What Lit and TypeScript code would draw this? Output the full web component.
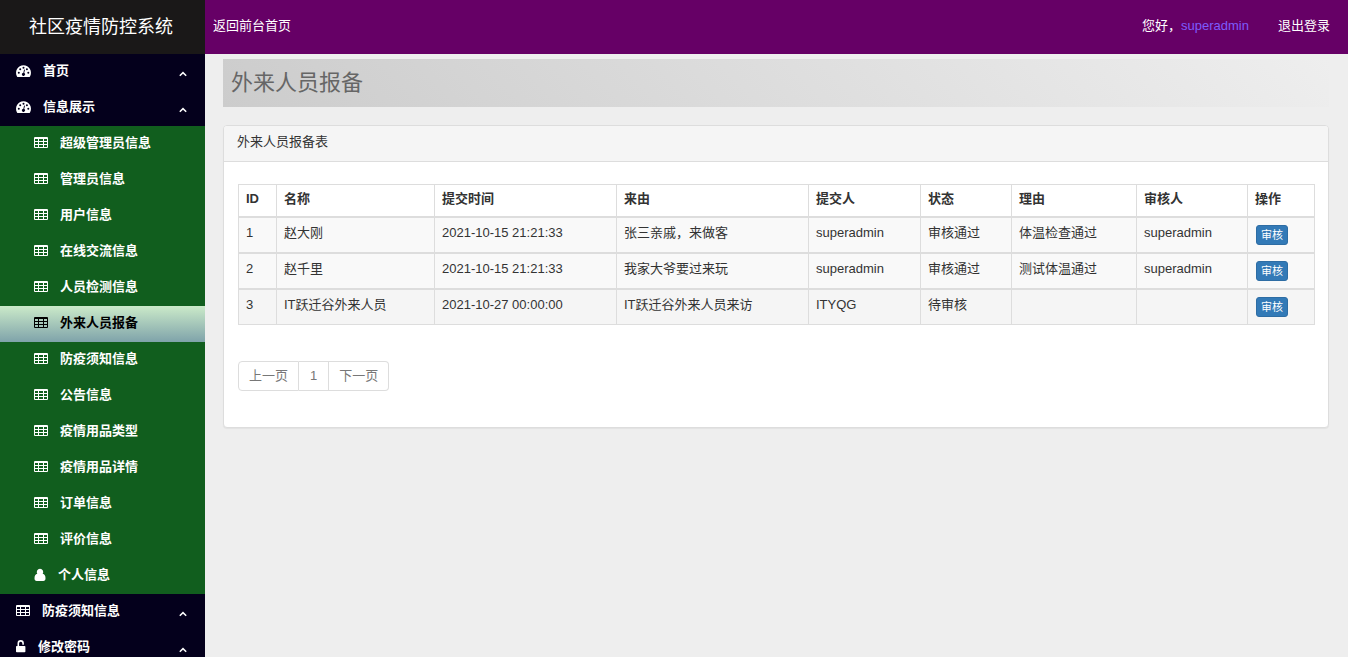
import { LitElement, html, css, svg } from "lit";
import { customElement } from "lit/decorators.js";
import { classMap } from "lit/directives/class-map.js";

type IconName = "dashboard" | "table" | "user" | "unlock";

const icons = {
  dashboard: svg`<path fill-rule="evenodd" d="M7.5 1.300a7.500 7.500 0 0 1 6.500 11.200q-.3.500-.9.500H1.900q-.6 0-.9-.5A7.500 7.500 0 0 1 7.500 1.300zM2.800 7.700a1 1 0 1 0 0 2 1 1 0 0 0 0-2zM4.200 4.300a1 1 0 1 0 0 2 1 1 0 0 0 0-2zM7.500 2.800a1 1 0 1 0 0 2 1 1 0 0 0 0-2zM10.900 4.300a1 1 0 1 0 0 2 1 1 0 0 0 0-2zM12.300 7.700a1 1 0 1 0 0 2 1 1 0 0 0 0-2zM8.100 5.600l-.8 3.300a1.500 1.500 0 1 0 .9.2l.8-3.300z"/>`,
  table: svg`<path fill-rule="evenodd" d="M1 1h12q1 0 1 1v9q0 1-1 1H1q-1 0-1-1V2q0-1 1-1zM1 3v2h3V3zM5 3v2h4V3zM10 3v2h3V3zM1 6v2h3V6zM5 6v2h4V6zM10 6v2h3V6zM1 9v2h3V9zM5 9v2h4V9zM10 9v2h3V9z"/>`,
  user: svg`<path d="M6 .8a3.200 3.200 0 0 1 2.700 5q2.800.7 2.800 4.500 0 2.700-2.200 2.700H2.700Q.5 13 .5 10.300q0-3.800 2.800-4.500A3.200 3.200 0 0 1 6 .8z"/>`,
  unlock: svg`<path d="M1.500 6V3.300a3.200 3.200 0 0 1 6.400 0v.900q0 .5-.5.500h-.6q-.5 0-.5-.5v-.9a1.600 1.600 0 0 0-3.200 0V6h5.500q.8 0 .8.800v4.700q0 .8-.8.800H.8q-.8 0-.8-.8V6.800Q0 6 .8 6z"/>`,
};

const iconWidths: Record<IconName, number> = { dashboard: 15, table: 14, user: 12, unlock: 10 };

const icon = (name: IconName) => html`<svg
  class="icon" width=${iconWidths[name]} height="14"
  viewBox="0 0 ${iconWidths[name]} 14" aria-hidden="true">${icons[name]}</svg>`;

const chevron = html`<svg class="chevron" width="8" height="6" viewBox="0 0 8 6" aria-hidden="true">
  <path d="M.8 4.800 4 1.600l3.200 3.200" fill="none" stroke="currentColor" stroke-width="1.500"/></svg>`;

interface Entry {
  label: string;
  icon: IconName;
  active?: boolean;
}

const displayItems: Entry[] = [
  ...["超级管理员信息", "管理员信息", "用户信息", "在线交流信息", "人员检测信息"].map(
    (label): Entry => ({ label, icon: "table" })),
  { label: "外来人员报备", icon: "table", active: true },
  ...["防疫须知信息", "公告信息", "疫情用品类型", "疫情用品详情", "订单信息", "评价信息"].map(
    (label): Entry => ({ label, icon: "table" })),
  { label: "个人信息", icon: "user" },
];

const groups: (Entry & { children?: Entry[] })[] = [
  { label: "首页", icon: "dashboard" },
  { label: "信息展示", icon: "dashboard", children: displayItems },
  { label: "防疫须知信息", icon: "table" },
  { label: "修改密码", icon: "unlock" },
];

@customElement("side-menu")
export class SideMenu extends LitElement {
  static styles = css`
    :host { display: block; background: #04001c; color: #fff; }
    ul { list-style: none; margin: 0; padding: 0; }
    .link {
      display: flex; align-items: center; gap: 12px; height: 36px; box-sizing: border-box;
      padding: 0 18px 2px 16px; color: inherit; font-weight: 700; text-decoration: none;
    }
    .label { flex: 1; }
    .icon { fill: currentColor; flex: none; }
    .chevron { margin-top: 6px; }
    .sub { background: #115e1e; }
    .sub .link { padding-left: 34px; }
    .sub .active { color: #000; background: linear-gradient(#cbeac9, #7fa3aa); }
  `;

  private link(entry: Entry, top: boolean) {
    return html`<a class=${classMap({ link: true, active: !!entry.active })} href="#">
      ${icon(entry.icon)}<span class="label">${entry.label}</span>${top ? chevron : ""}
    </a>`;
  }

  render() {
    return html`<nav><ul>
      ${groups.map((g) => html`<li>
        ${this.link(g, true)}
        ${g.children
          ? html`<ul class="sub">${g.children.map((c) => html`<li>${this.link(c, false)}</li>`)}</ul>`
          : ""}
      </li>`)}
    </ul></nav>`;
  }
}

const columns: [string, number][] = [
  ["ID", 38], ["名称", 158], ["提交时间", 182], ["来由", 192], ["提交人", 112],
  ["状态", 91], ["理由", 125], ["审核人", 111], ["操作", 67],
];

const rows = [
  ["1", "赵大刚", "2021-10-15 21:21:33", "张三亲戚，来做客", "superadmin", "审核通过", "体温检查通过", "superadmin"],
  ["2", "赵千里", "2021-10-15 21:21:33", "我家大爷要过来玩", "superadmin", "审核通过", "测试体温通过", "superadmin"],
  ["3", "IT跃迁谷外来人员", "2021-10-27 00:00:00", "IT跃迁谷外来人员来访", "ITYQG", "待审核", "", ""],
];

@customElement("report-panel")
export class ReportPanel extends LitElement {
  static styles = css`
    :host {
      display: block; background: #fff; border: 1px solid #ddd; border-radius: 4px;
      box-shadow: 0 1px 1px rgba(0, 0, 0, 0.05);
    }
    .heading {
      margin: 0; padding: 7px 13px 10px; font-size: 13px; line-height: 18px; font-weight: 400;
      background: #f5f5f5; border-bottom: 1px solid #ddd; border-radius: 3px 3px 0 0;
    }
    .body { padding: 22px 13px 36px 14px; }
    table {
      width: 100%; table-layout: fixed; border-collapse: separate; border-spacing: 0;
      border: solid #ddd; border-width: 1px 0 0 1px;
    }
    th, td {
      padding: 5px 7px 8px; line-height: 18px; text-align: left; vertical-align: top;
      border: solid #ddd; border-width: 0 1px 2px 0;
    }
    td { padding-top: 6px; background: #f9f9f9; }
    tr:last-child td { border-bottom-width: 1px; }
    tbody tr:last-child td { background: #f5f5f5; }
    thead tr:last-child th { border-bottom-width: 2px; }
    .action { padding: 7px 8px; }
    .audit {
      display: block; box-sizing: border-box; height: 20px; padding: 0 4px; font: inherit; font-size: 11px;
      line-height: 18px; color: #fff; background: #337ab7; border: 1px solid #2e6da4; border-radius: 3px;
    }
    .pages { display: flex; list-style: none; margin: 36px 0 0; padding: 0; }
    .page {
      display: block; padding: 5px 10px; line-height: 18px; color: #777; text-decoration: none;
      border: solid #ddd; border-width: 1px 1px 1px 0;
    }
    li:first-child .page { border-left-width: 1px; border-radius: 4px 0 0 4px; }
    li:last-child .page { border-radius: 0 4px 4px 0; }
    .number { padding-left: 11px; padding-right: 11px; }
  `;

  render() {
    return html`
      <h2 class="heading">外来人员报备表</h2>
      <div class="body">
        <table>
          <colgroup>${columns.map(([, w]) => html`<col style="width:${w}px">`)}</colgroup>
          <thead><tr>${columns.map(([name]) => html`<th scope="col">${name}</th>`)}</tr></thead>
          <tbody>
            ${rows.map((r) => html`<tr>
              ${r.map((v) => html`<td>${v}</td>`)}
              <td class="action"><button class="audit" type="button">审核</button></td>
            </tr>`)}
          </tbody>
        </table>
        <ul class="pages">
          <li><a class="page" href="#">上一页</a></li>
          <li><a class="page number" href="#">1</a></li>
          <li><a class="page" href="#">下一页</a></li>
        </ul>
      </div>`;
  }
}

@customElement("app-root")
export class AppRoot extends LitElement {
  static styles = css`
    :host {
      display: grid; grid-template-columns: 205px 1fr; grid-template-rows: 54px 1fr;
      height: 100vh; overflow: hidden; background: #eee; color: #333;
      font-family: "Liberation Sans", "Noto Sans CJK SC", sans-serif; font-size: 13px; line-height: 18px;
    }
    .brand {
      display: flex; align-items: center; justify-content: center; padding-right: 3px; background: #1a1818;
      color: #fff; font-size: 18px; text-decoration: none;
    }
    .bar {
      display: flex; align-items: center; gap: 29px; padding: 0 18px 2px 8px; background: #606;
    }
    .bar a { color: #fff; text-decoration: none; }
    .hello { margin-left: auto; color: #fff; }
    .bar .name { color: #7c5cfc; }
    main { padding: 5px 19px 5px 18px; }
    .title {
      margin: 0 0 18px; padding: 8px; font-size: 22px; line-height: 32px; font-weight: 400;
      color: #666; background: linear-gradient(45deg, #ccc, #eee);
    }
  `;

  render() {
    return html`
      <a class="brand" href="#">社区疫情防控系统</a>
      <header class="bar">
        <a href="#">返回前台首页</a>
        <span class="hello">您好，<a class="name" href="#">superadmin</a></span>
        <a href="#">退出登录</a>
      </header>
      <side-menu></side-menu>
      <main>
        <h1 class="title">外来人员报备</h1>
        <report-panel></report-panel>
      </main>`;
  }
}
